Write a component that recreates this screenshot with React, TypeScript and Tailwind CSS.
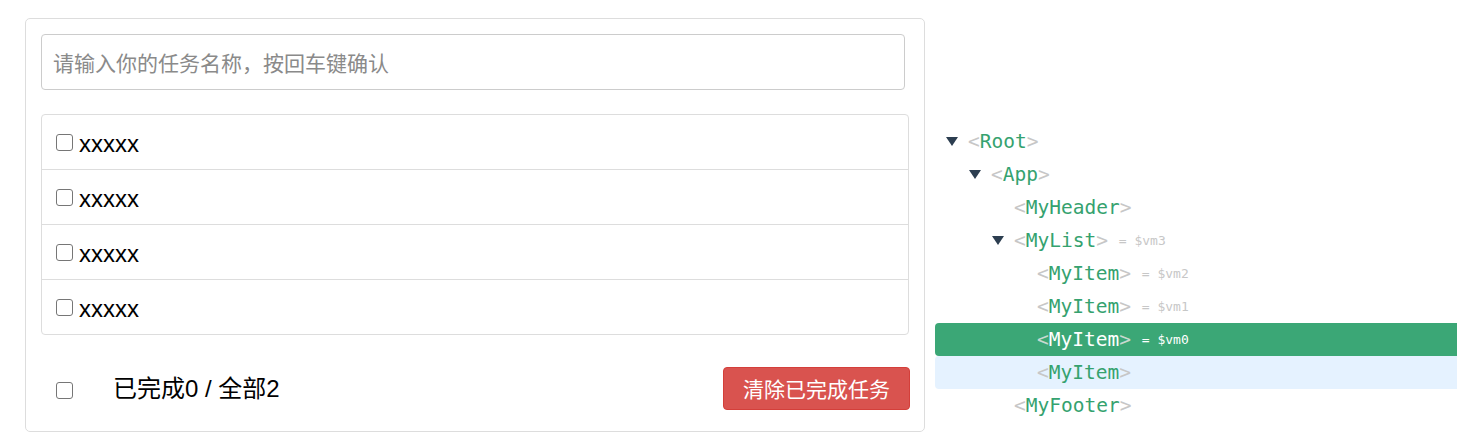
import React from "react";

type Node = {
  depth: number;
  tri?: boolean;
  name: string;
  vm?: string;
  selected?: boolean;
  hover?: boolean;
};

const nodes: Node[] = [
  { depth: 0, tri: true, name: "Root" },
  { depth: 1, tri: true, name: "App" },
  { depth: 2, name: "MyHeader" },
  { depth: 2, tri: true, name: "MyList", vm: "$vm3" },
  { depth: 3, name: "MyItem", vm: "$vm2" },
  { depth: 3, name: "MyItem", vm: "$vm1" },
  { depth: 3, name: "MyItem", vm: "$vm0", selected: true },
  { depth: 3, name: "MyItem", hover: true },
  { depth: 2, name: "MyFooter" },
];

const depthPad = ["pl-[11px]", "pl-[34px]", "pl-[57px]", "pl-[80px]"];

function Check() {
  return (
    <span className="inline-block w-[17px] h-[17px] shrink-0 border-[1.5px] border-[#767676] rounded-[3px] bg-white" />
  );
}

function TreeRow({ n }: { n: Node }) {
  const bg = n.selected
    ? "bg-[#3ba776] rounded-l-[4px]"
    : n.hover
    ? "bg-[#e5f2ff] rounded-l-[4px]"
    : "";
  return (
    <div className={`h-[33px] flex items-center ${depthPad[n.depth]} ${bg}`}>
      <span className="w-[22px] shrink-0 flex items-center">
        {n.tri && (
          <svg width="12" height="9" viewBox="0 0 12 9">
            <polygon points="0,0 12,0 6,9" fill="#2c3e50" />
          </svg>
        )}
      </span>
      <span className="text-[19.5px] leading-none whitespace-pre">
        <span className={n.selected ? "text-[#c8d9d0]" : "text-[#c7c7c7]"}>&lt;</span>
        <span className={n.selected ? "text-white" : "text-[#35a26f]"}>{n.name}</span>
        <span className={n.selected ? "text-[#c8d9d0]" : "text-[#c7c7c7]"}>&gt;</span>
      </span>
      {n.vm && (
        <span
          className={`ml-[3px] text-[13px] leading-none whitespace-pre ${
            n.selected ? "text-white" : "text-[#c7c7c7]"
          }`}
        >
          {" = " + n.vm}
        </span>
      )}
    </div>
  );
}

export default function App() {
  const sans = { fontFamily: '"Liberation Sans", "Noto Sans CJK SC", sans-serif' };
  return (
    <div className="w-[1457px] h-[432px] overflow-hidden bg-white flex items-start" style={sans}>
      <div className="ml-[25px] mt-[18px] w-[900px] border border-[#dddddd] rounded-[5px] px-[15px] pt-[15px] pb-[21px] shrink-0">
        <input
          className="w-[864px] h-[56px] border border-[#cccccc] rounded-[4px] pl-[11px] text-[21px] outline-none placeholder:text-[#8a8a8a]"
          style={{ fontFamily: '"Noto Sans CJK SC", sans-serif' }}
          placeholder="请输入你的任务名称，按回车键确认"
        />
        <ul className="mt-[24px] border border-[#dddddd] rounded-[4px]">
          {[0, 1, 2, 3].map((i) => (
            <li
              key={i}
              className={`h-[54px] flex items-center pl-[14px] ${i < 3 ? "border-b border-[#dddddd] h-[55px]" : ""}`}
            >
              <Check />
              <span className="ml-[6px] mt-[4px] text-[24px] text-black leading-none">xxxxx</span>
            </li>
          ))}
        </ul>
        <div className="mt-[32px] h-[43px] flex items-center justify-between pl-[15px] -mr-[1px]">
          <div className="flex items-center">
            <span className="mt-[3px] flex">
              <Check />
            </span>
            <span className="ml-[40px] text-[24px] text-black leading-none">已完成0 / 全部2</span>
          </div>
          <button
            className="h-[43px] px-[19px] bg-[#d9534f] border border-[#d43f3a] rounded-[4px] text-white text-[21px] leading-none"
            style={{ fontFamily: '"Noto Sans CJK SC", sans-serif' }}
          >
            清除已完成任务
          </button>
        </div>
      </div>
      <div
        className="ml-[10px] mt-[125px] flex-1 flex flex-col"
        style={{ fontFamily: '"DejaVu Sans Mono", "Liberation Mono", monospace' }}
      >
        {nodes.map((n, i) => (
          <TreeRow key={i} n={n} />
        ))}
      </div>
    </div>
  );
}
